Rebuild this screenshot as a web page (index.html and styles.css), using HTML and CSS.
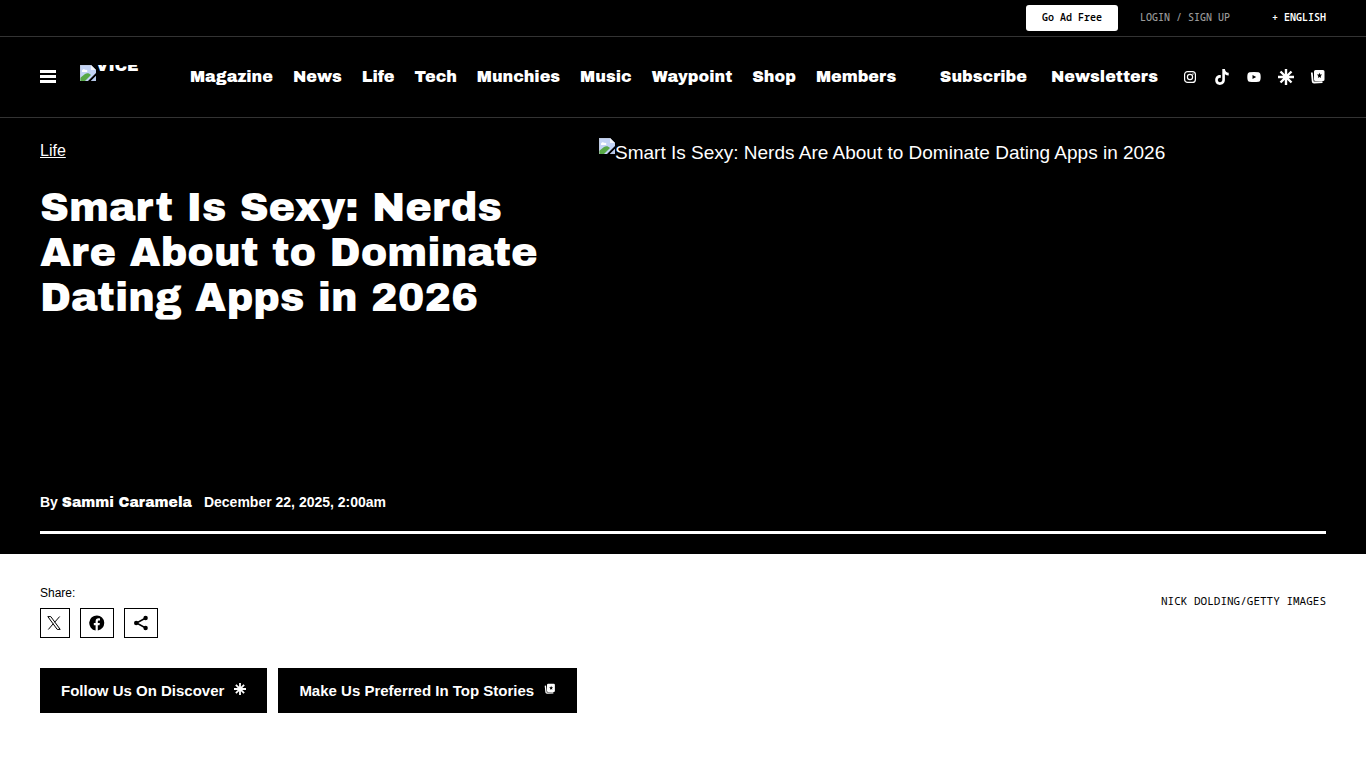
FILE: index.html
```html
<!DOCTYPE html>
<html lang="en">
<head>
<meta charset="utf-8">
<meta name="viewport" content="width=device-width, initial-scale=1">
<title>Smart Is Sexy: Nerds Are About to Dominate Dating Apps in 2026</title>
<link rel="stylesheet" href="styles.css">
</head>
<body>
<svg class="sprite" aria-hidden="true">
  <symbol id="missing" viewBox="0 0 16 16">
    <path d="M0 0h11l5 5v11H0z" fill="#c3d3f5"/>
    <path d="M0 16v-3l5-4c2-1 4-1 6 1l-6 6z" fill="#58a846"/>
    <path d="M2 6c0-2 3-2 3-1 2-1 3 1 2 2H2z" fill="#fff"/>
    <path d="M11 0v5h5z" fill="#f3f5fa"/>
    <path d="M0 0h11M0 0v16" stroke="#b9c1cf" fill="none"/>
    <path d="M16 8v3l-5 5H8z" fill="#000"/>
    <path d="M16 11v5h-5z" fill="#b6c7e8"/>
  </symbol>
  <symbol id="burst" viewBox="0 0 16 16">
    <path d="M8 0v16M0 8h16M2.500 2.500l11 11M13.500 2.500l-11 11" stroke="currentColor" stroke-width="2.400" fill="none"/>
  </symbol>
  <symbol id="cards" viewBox="0 0 16 16">
    <path d="M5.500 1h7.500A1.500 1.500 0 0 1 14.500 2.500v8a1.500 1.500 0 0 1-1.500 1.500h-7.500A1.500 1.500 0 0 1 4 10.500v-8A1.500 1.500 0 0 1 5.500 1zM9.500 3.800L8.800 5.500l-1.900.1L8.300 7l-.4 2 1.600-1 1.600 1-.4-2 1.400-1.400-1.900-.1z" fill="currentColor" fill-rule="evenodd"/>
    <path d="M1.800 3.500l.9 8.900q.1 1.100 1.300 1.100l8.500-.3" stroke="currentColor" stroke-width="1.800" fill="none"/>
  </symbol>
</svg>

<header>
  <div class="topbar">
    <a class="ad-free" href="#">Go Ad Free</a>
    <a class="login" href="#">LOGIN / SIGN UP</a>
    <button class="language" type="button">+ ENGLISH</button>
  </div>
  <div class="masthead">
    <button class="menu" type="button" aria-label="Menu"><svg width="16" height="13" viewBox="0 0 16 13"><path d="M0 0h16v3H0zM0 5h16v3H0zM0 10h16v3H0z" fill="#fff"/></svg></button>
    <a class="logo" href="#"><svg width="16" height="16" aria-hidden="true"><use href="#missing"/></svg><span>VICE</span></a>
    <nav class="sections" aria-label="Sections">
      <a href="#">Magazine</a><a href="#">News</a><a href="#">Life</a><a href="#">Tech</a><a href="#">Munchies</a><a href="#">Music</a><a href="#">Waypoint</a><a href="#">Shop</a><a href="#">Members</a>
    </nav>
    <nav class="extras" aria-label="Subscriptions">
      <a href="#">Subscribe</a><a href="#">Newsletters</a>
    </nav>
    <div class="social">
      <a href="#" aria-label="Instagram"><svg width="16" height="16" viewBox="0 0 16 16" fill="none" stroke="#fff"><rect x="2.600" y="2.600" width="10.800" height="10.800" rx="3" stroke-width="1.200"/><circle cx="8" cy="8" r="2.600" stroke-width="1.200"/><circle cx="11" cy="5" r=".7" fill="#fff" stroke="none"/></svg></a>
      <a href="#" aria-label="TikTok"><svg width="16" height="16" viewBox="0 0 16 16"><path d="M8.300 0h2.600c.2 2.200 1.600 3.600 3.800 3.800v2.700c-1.400 0-2.700-.4-3.800-1.200v5.400c0 6.600-9.700 7.100-9.700.3 0-3.300 2.600-5.300 5.600-4.900v2.800C3.200 8 2.800 13 6 13.200c1.500 0 2.300-1 2.300-2.500z" fill="#fff"/></svg></a>
      <a href="#" aria-label="YouTube"><svg width="16" height="16" viewBox="0 0 16 16"><path d="M3.500 3.200q4.500-.4 9 0Q14.700 3.500 14.700 8t-2.200 4.800q-4.500.4-9 0Q1.300 12.500 1.300 8t2.200-4.800zM6.500 5.900v4.200L10.200 8z" fill="#fff" fill-rule="evenodd"/></svg></a>
      <a href="#" aria-label="Discover"><svg width="16" height="16"><use href="#burst"/></svg></a>
      <a href="#" aria-label="Top stories"><svg width="16" height="16"><use href="#cards"/></svg></a>
    </div>
  </div>
</header>

<main>
  <section class="hero">
    <div class="hero-grid">
      <div class="intro">
        <a class="category" href="#">Life</a>
        <h1>Smart Is Sexy: Nerds Are About to Dominate Dating Apps in 2026</h1>
        <p class="byline"><span class="author">By <a href="#">Sammi Caramela</a></span><time datetime="2025-12-22T02:00">December 22, 2025, 2:00am</time></p>
      </div>
      <div class="picture"><svg width="16" height="16" aria-hidden="true"><use href="#missing"/></svg><span>Smart Is Sexy: Nerds Are About to Dominate Dating Apps in 2026</span></div>
    </div>
  </section>

  <section class="details">
    <div class="share-row">
      <div>
        <p class="share-label">Share:</p>
        <div class="share">
          <a class="x" href="#" aria-label="Share on X"><svg width="14" height="14" viewBox="0 0 14 14" fill="none" stroke="#000"><path d="M.8.600h3l9.400 12.800h-3zM12.700.5L7.600 6.300M6.300 7.700l-5 5.800" stroke-width="1"/></svg></a>
          <a href="#" aria-label="Share on Facebook"><svg width="16" height="16" viewBox="0 0 16 16"><path d="M8 .4a7.600 7.600 0 0 0-1.400 15.100V10.200H4.800V7.900h1.800V6.500c0-2.200 1.100-3.200 2.900-3.200.7 0 1.200.1 1.500.2v2h-1c-.9 0-1.200.4-1.200 1.200v1.200h2.100l-.4 2.300H8.800v5.300A7.600 7.600 0 0 0 8 .4z"/></svg></a>
          <a href="#" aria-label="More ways to share"><svg width="16" height="16" viewBox="0 0 16 16"><path d="M12.700 3L3.500 8l9.200 5" fill="none" stroke="#000" stroke-width="1.500"/><circle cx="12.600" cy="3" r="2.200"/><circle cx="3.200" cy="8" r="2.200"/><circle cx="12.600" cy="13" r="2.200"/></svg></a>
        </div>
      </div>
      <p class="credit">NICK DOLDING/GETTY IMAGES</p>
    </div>
    <div class="follow">
      <a href="#">Follow Us On Discover <svg width="12" height="12"><use href="#burst"/></svg></a>
      <a href="#">Make Us Preferred In Top Stories <svg width="12" height="12"><use href="#cards"/></svg></a>
    </div>
  </section>
</main>
</body>
</html>
```
FILE: styles.css
```css
* { box-sizing: border-box; }

body {
  margin: 0;
  background: #fff;
  color: #000;
  font-family: "Liberation Sans", Arial, sans-serif;
}

a { color: inherit; text-decoration: none; }
button { padding: 0; border: 0; background: none; color: inherit; font: inherit; }
h1, p { margin: 0; }
svg { display: block; flex: none; }
.sprite { position: absolute; width: 0; height: 0; }

header { background: #000; color: #fff; }

.topbar {
  display: flex;
  align-items: center;
  justify-content: flex-end;
  height: 37px;
  padding: 0 40px;
  border-bottom: 1px solid #333;
  font: 600 10px/16px "Noto Sans Mono", "DejaVu Sans Mono", monospace;
}
.topbar > * { padding: 4px 0 6px; }
.topbar .ad-free {
  padding: 4px 16px 6px;
  border-radius: 3px;
  background: #fff;
  color: #000;
}
.login { margin: 0 42px 0 22px; color: #999; font-weight: 500; }

.masthead {
  display: flex;
  align-items: center;
  height: 81px;
  padding: 0 40px;
  border-bottom: 1px solid #333;
  font: 400 16px/24px "Archivo Black", "Liberation Sans", sans-serif;
}
.menu { margin: 0 24px 2px 0; }
.logo {
  display: flex;
  width: 80px;
  height: 16px;
  margin: 0 30px 8px 0;
  overflow: hidden;
}
.logo span { line-height: 2px; }
.sections { display: flex; gap: 20px; }
.extras { display: flex; gap: 24px; margin-left: auto; }
.social { display: flex; gap: 16px; margin-left: 24px; }

.hero {
  padding: 20px 40px;
  background: #000;
  color: #fff;
}
.hero-grid {
  display: grid;
  grid-template-columns: 529fr 727fr;
  gap: 30px;
  min-height: 396px;
  border-bottom: 3px solid #fff;
}
.intro { display: flex; flex-direction: column; align-items: flex-start; }
.category { font-size: 16px; line-height: 26px; text-decoration: underline; }
h1 {
  margin-top: 21px;
  font: 400 40px/45px "Archivo Black", "Liberation Sans", sans-serif;
}
.byline {
  display: flex;
  gap: 12px;
  margin-top: auto;
  padding-bottom: 18px;
  font-size: 14px;
  line-height: 20px;
  font-weight: 700;
}
.author a { font-family: "Archivo Black", "Liberation Sans", sans-serif; font-weight: 400; }
.picture { display: flex; font-size: 19px; line-height: 30px; }

.details { padding: 30px 40px; }
.share-row { display: flex; justify-content: space-between; }
.share-label { font-size: 12px; line-height: 18px; }
.share { display: flex; gap: 10px; margin-top: 6px; }
.share a {
  display: flex;
  align-items: center;
  justify-content: center;
  width: 34px;
  height: 30px;
  border: 1px solid #000;
}
.share .x { width: 30px; padding-right: 2px; }
.credit {
  margin-top: 8px;
  font: 11px/18px "Noto Sans Mono", "DejaVu Sans Mono", monospace;
}
.follow { display: flex; gap: 11px; margin-top: 30px; }
.follow a {
  display: flex;
  gap: 10px;
  padding: 12px 21px;
  background: #000;
  color: #fff;
  font-size: 15px;
  line-height: 21px;
  font-weight: 700;
}
.follow svg { margin-top: 3px; }
```
